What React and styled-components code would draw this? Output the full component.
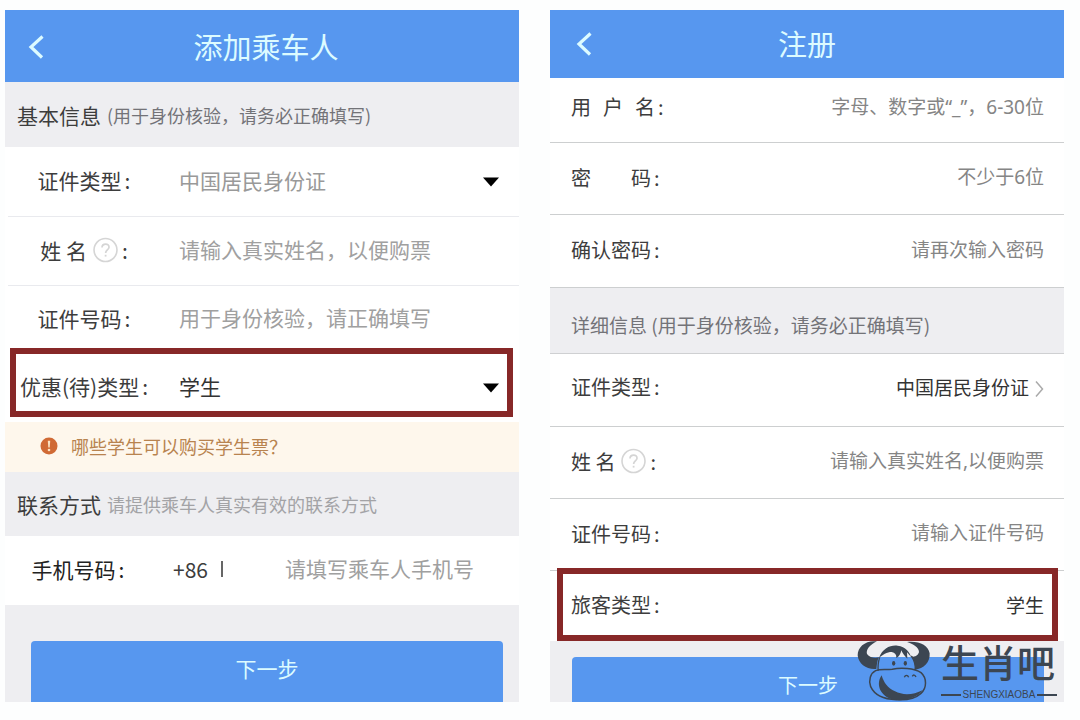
import React from "react";
import styled, { createGlobalStyle } from "styled-components";

const GlobalStyle = createGlobalStyle`
  *, *::before, *::after { box-sizing: border-box; }
  body {
    margin: 0;
    background: #fdfefe;
    color: #3d3d3d;
    font-family: "Noto Sans CJK SC", "Noto Sans", sans-serif;
  }
  button, input, select { font: inherit; color: inherit; }
`;

const Page = styled.main`
  display: grid;
  grid-template-columns: 1fr 1fr;
  align-items: start;
  gap: 31px;
  padding: 10px 16px 16px 5px;
`;

const Screen = styled.form`
  position: relative;
  min-width: 0;
  background: #fff;
  font-size: ${(p) => p.$size}px;
`;

const Header = styled.header`
  display: grid;
  grid-template-columns: 60px 1fr 60px;
  align-items: center;
  height: ${(p) => p.$height}px;
  padding-top: ${(p) => p.$top || 0}px;
  background: #5797ef;
  color: #dcfbff;
`;

const BackButton = styled.button`
  display: flex;
  padding: 0 0 0 ${(p) => p.$inset}px;
  border: 0;
  background: none;
`;

const Title = styled.h1`
  margin: 0;
  padding: 0 0 2px ${(p) => p.$shift || 0}px;
  font-size: 29px;
  font-weight: 400;
  line-height: 40px;
  text-align: center;
`;

const Section = styled.h2`
  display: flex;
  align-items: center;
  gap: 6px;
  height: ${(p) => p.$height}px;
  margin: 0;
  padding: ${(p) => p.$top || 0}px 20px 0 ${(p) => p.$inset || 12}px;
  border-bottom: ${(p) => (p.$lined ? "1px solid #cfd0d2" : "0")};
  background: #eeeef1;
  font-size: inherit;
  font-weight: 400;
  white-space: nowrap;
`;

const Hint = styled.span`
  color: ${(p) => p.$color};
  font-size: ${(p) => p.$size}px;
`;

const lineColors = { soft: "#e9eaee", hard: "#cdcfd0" };

const Row = styled.div`
  position: relative;
  display: flex;
  align-items: center;
  height: ${(p) => p.$height}px;
  padding: 0 20px ${(p) => p.$bottom ?? 4}px ${(p) => p.$inset || 0}px;
  white-space: nowrap;

  &::after {
    content: "";
    position: absolute;
    left: ${(p) => (p.$line === "soft" ? 3 : 0)}px;
    right: 0;
    bottom: 0;
    height: 1px;
    background: ${(p) => lineColors[p.$line] || "transparent"};
  }
`;

const Label = styled.label`
  display: flex;
  flex: none;
  align-items: center;
  justify-content: ${(p) => (p.$width ? "center" : "flex-start")};
  width: ${(p) => (p.$width ? p.$width + "px" : "auto")};
  color: ${(p) => p.$color || "#3d3d3d"};

  &::after {
    content: ":";
    margin-left: 3px;
  }
`;

const Spread = styled.span`
  display: flex;
  gap: ${(p) => p.$gap}px;
`;

const control = `
  flex: 1;
  min-width: 0;
  width: 0;
  height: 40px;
  padding: 0;
  border: 0;
  outline: 0;
  background: none;
  appearance: none;
`;

const Input = styled.input`
  ${control}
  margin-left: ${(p) => p.$gap || 0}px;
  font-family: "Noto Sans", "Noto Sans CJK SC", sans-serif;
  font-size: ${(p) => p.$size || 21}px;
  text-align: ${(p) => p.$align || "left"};
  &::placeholder { color: ${(p) => p.$tone || "#a0a0a0"}; opacity: 1; }
`;

const Select = styled.select`
  ${control}
  margin-left: ${(p) => p.$gap || 0}px;
  color: ${(p) => p.$color || "#333"};
  font-size: ${(p) => p.$size || 21}px;
  text-align-last: ${(p) => p.$align || "left"};
`;

const CountryCode = styled.span`
  display: flex;
  align-items: center;
  gap: 13px;
  width: 112px;
  margin-left: 22px;

  &::after {
    content: "";
    width: 2px;
    height: 16px;
    background: #666;
  }
`;

const Frame = styled.div`
  position: absolute;
  inset: ${(p) => p.$inset};
  z-index: 1;
  border: 6px solid #872828;
  pointer-events: none;
`;

const Notice = styled.a`
  display: flex;
  align-items: center;
  gap: 13px;
  height: 50px;
  padding: 0 0 2px 35px;
  background: #fef7ec;
  color: #b8834f;
  font-size: 18px;
  text-decoration: none;
`;

const Footer = styled.footer`
  padding: ${(p) => p.$top}px ${(p) => p.$right}px 0 ${(p) => p.$left}px;
  background: #eeeef1;
`;

const SubmitButton = styled.button`
  display: block;
  width: 100%;
  height: ${(p) => p.$height}px;
  padding: ${(p) => p.$padding};
  border: 0;
  border-radius: 4px 4px 0 0;
  background: #5797ef;
  color: #dcfbff;
  font-size: ${(p) => p.$size}px;
  line-height: 28px;
`;

const Watermark = styled.div`
  position: absolute;
  right: 7px;
  bottom: 0;
  z-index: 2;
  display: flex;
  gap: 9px;
  color: #3c4652;
`;

const Brand = styled.div`
  display: flex;
  flex-direction: column;
  width: 116px;
`;

const BrandName = styled.strong`
  height: 49px;
  font-size: 38px;
  font-weight: 500;
  line-height: 42px;
  white-space: nowrap;
`;

const BrandLatin = styled.span`
  display: flex;
  align-items: center;
  gap: 2px;
  font-family: "Liberation Sans", Arial, sans-serif;
  font-size: 10px;
  line-height: 12px;

  &::before, &::after {
    content: "";
    flex: 1;
    height: 2px;
    background: currentColor;
  }
`;

const Drawing = styled.svg`
  display: block;
  flex: none;
  margin: ${(p) => p.$margin || "0"};
`;

const BackIcon = () => (
  <Drawing width="16" height="24" viewBox="0 0 16 24" fill="none" stroke="currentColor" strokeWidth="3.2" aria-hidden="true">
    <path d="M14.500 1.500 L3 12 L14 22.500" />
  </Drawing>
);

const HelpIcon = () => (
  <Drawing $margin="0 1px 0 6px" width="25" height="26" viewBox="0 0 25 26" fill="none" stroke="#d5d5d5" aria-hidden="true">
    <circle cx="12.500" cy="13" r="11.500" strokeWidth="1.600" />
    <path d="M9 10.500 C9 6 16.500 6 16 10.500 C15.800 12.500 12.600 13 12.600 16" strokeWidth="1.700" />
    <path d="M12.600 17.800 V19.600" strokeWidth="1.800" />
  </Drawing>
);

const DropArrow = () => (
  <Drawing width="16" height="10" viewBox="0 0 16 10" $margin="4px 0 0" aria-hidden="true">
    <path d="M0 0.500 H16 L8 9.500 Z" fill="#000" />
  </Drawing>
);

const NextIcon = () => (
  <Drawing width="9" height="18" viewBox="0 0 9 18" $margin="4px 0 0 6px" fill="none" stroke="#aaa" strokeWidth="1.500" aria-hidden="true">
    <path d="M1 1.500 L7.500 9 L1 16.500" />
  </Drawing>
);

const AlertIcon = () => (
  <Drawing width="18" height="18" viewBox="0 0 18 18" aria-hidden="true">
    <circle cx="9" cy="9" r="8.500" fill="#d06a35" />
    <path d="M7.800 3.800 H10.200 L9.700 10.500 H8.300 Z" fill="#fbe3c4" />
    <circle cx="9" cy="13" r="1.300" fill="#fbe3c4" />
  </Drawing>
);

const OxIcon = () => (
  <Drawing width="75" height="62" viewBox="54 62 225 186" fill="currentColor" aria-hidden="true">
    <path d="M114 66 C80 62 56 82 56 108 C58 134 84 152 112 149 C114 134 114 124 120 114 C108 117 92 115 84 104 C80 90 94 76 114 66 Z" />
    <path d="M204 68 C240 64 268 78 272 102 C274 130 254 148 228 151 C230 134 226 122 217 111 C226 115 238 108 240 98 C240 84 222 74 204 68 Z" />
    <path d="M120 116 C130 86 156 76 176 79 C200 82 212 98 217 114 L204 99 L205 118 C196 110 191 102 187 93 C185 104 180 112 172 116 C173 106 168 100 158 98 C144 98 130 106 120 116 Z" />
    <path d="M122 114 C117 130 116 142 118 154 M217 110 C228 126 230 140 228 152" fill="none" stroke="currentColor" strokeWidth="4" />
    <path d="M110 154 C126 147 146 152 160 150 C184 144 226 146 246 160 C264 176 264 206 246 222 C226 240 198 243 172 241 C134 240 106 226 95 202 C88 182 94 162 110 154 Z" fill="none" stroke="currentColor" strokeWidth="4.5" />
    <path d="M128 168 C112 190 118 226 158 240 C194 248 234 236 252 212 C222 228 190 228 168 216 C146 206 134 190 128 168 Z" />
    <ellipse cx="164" cy="132" rx="5" ry="7" />
    <ellipse cx="199" cy="132" rx="5" ry="7" />
    <path d="M196 174 C199 166 206 166 209 174 M220 171 C223 165 228 166 231 173" fill="none" stroke="currentColor" strokeWidth="4" />
  </Drawing>
);

const rightField = { $align: "right", $size: 19, $tone: "#858585" };

function PassengerScreen() {
  return (
    <Screen $size={21}>
      <Header $height={72} $top={2}>
        <BackButton type="button" aria-label="返回" $inset={23}><BackIcon /></BackButton>
        <Title $shift={8}>添加乘车人</Title>
      </Header>
      <Section $height={65}>
        基本信息 <Hint $size={18} $color="#737378">(用于身份核验，请务必正确填写)</Hint>
      </Section>
      <Row $height={70} $line="soft">
        <Label htmlFor="p-type" $width={158}>证件类型</Label>
        <Select id="p-type" $gap={16} $color="#999"><option>中国居民身份证</option></Select>
        <DropArrow />
      </Row>
      <Row $height={69} $line="soft">
        <Label htmlFor="p-name" $width={158}>姓 名<HelpIcon /></Label>
        <Input id="p-name" $gap={16} placeholder="请输入真实姓名，以便购票" />
      </Row>
      <Row $height={68}>
        <Label htmlFor="p-id" $width={158}>证件号码</Label>
        <Input id="p-id" $gap={16} placeholder="用于身份核验，请正确填写" />
      </Row>
      <Row $height={68}>
        <Label htmlFor="p-discount" $width={158}>优惠(待)类型</Label>
        <Select id="p-discount" $gap={16}><option>学生</option></Select>
        <DropArrow />
        <Frame $inset="-6px 6px 5px 5px" />
      </Row>
      <Notice href="#student-tickets"><AlertIcon />哪些学生可以购买学生票？</Notice>
      <Section $height={64}>
        联系方式 <Hint $size={18} $color="#a3a3a6">请提供乘车人真实有效的联系方式</Hint>
      </Section>
      <Row $height={69}>
        <Label htmlFor="p-phone" $width={146} $color="#222">手机号码</Label>
        <CountryCode>+86</CountryCode>
        <Input id="p-phone" type="tel" placeholder="请填写乘车人手机号" />
      </Row>
      <Footer $top={36} $left={26} $right={16}>
        <SubmitButton type="button" $height={61} $padding="0 0 8px" $size={21}>下一步</SubmitButton>
      </Footer>
    </Screen>
  );
}

function RegisterScreen() {
  return (
    <Screen $size={20}>
      <Header $height={68}>
        <BackButton type="button" aria-label="返回" $inset={26}><BackIcon /></BackButton>
        <Title>注册</Title>
      </Header>
      <Row $height={65} $line="hard" $inset={21} $bottom={8}>
        <Label htmlFor="r-user">
          <Spread $gap={12}><span>用</span><span>户</span><span>名</span></Spread>
        </Label>
        <Input id="r-user" {...rightField} placeholder="字母、数字或“_”，6-30位" />
      </Row>
      <Row $height={72} $line="hard" $inset={21}>
        <Label htmlFor="r-pass">
          <Spread $gap={40}><span>密</span><span>码</span></Spread>
        </Label>
        <Input id="r-pass" type="password" {...rightField} placeholder="不少于6位" />
      </Row>
      <Row $height={73} $line="hard" $inset={21}>
        <Label htmlFor="r-confirm">确认密码</Label>
        <Input id="r-confirm" type="password" {...rightField} placeholder="请再次输入密码" />
      </Row>
      <Section $height={66} $top={8} $inset={21} $lined>
        <Hint $size={19} $color="#737378">详细信息 (用于身份核验，请务必正确填写)</Hint>
      </Section>
      <Row $height={73} $line="hard" $inset={21} $bottom={8}>
        <Label htmlFor="r-type">证件类型</Label>
        <Select id="r-type" $align="right" $size={19}><option>中国居民身份证</option></Select>
        <NextIcon />
      </Row>
      <Row $height={72} $line="hard" $inset={21}>
        <Label htmlFor="r-name">姓 名<HelpIcon /></Label>
        <Input id="r-name" {...rightField} placeholder="请输入真实姓名,以便购票" />
      </Row>
      <Row $height={72} $line="hard" $inset={21}>
        <Label htmlFor="r-id">证件号码</Label>
        <Input id="r-id" {...rightField} placeholder="请输入证件号码" />
      </Row>
      <Row $height={70} $inset={21}>
        <Label htmlFor="r-kind">旅客类型</Label>
        <Select id="r-kind" $align="right" $size={19}><option>学生</option></Select>
        <Frame $inset="-3px 6px 0 7px" />
      </Row>
      <Footer $top={16} $left={22} $right={20}>
        <SubmitButton type="button" $height={45} $padding="10px 0 0" $size={20}>下一步</SubmitButton>
      </Footer>
      <Watermark>
        <OxIcon />
        <Brand>
          <BrandName>生肖吧</BrandName>
          <BrandLatin>SHENGXIAOBA</BrandLatin>
        </Brand>
      </Watermark>
    </Screen>
  );
}

export default function App() {
  return (
    <>
      <GlobalStyle />
      <Page>
        <PassengerScreen />
        <RegisterScreen />
      </Page>
    </>
  );
}
